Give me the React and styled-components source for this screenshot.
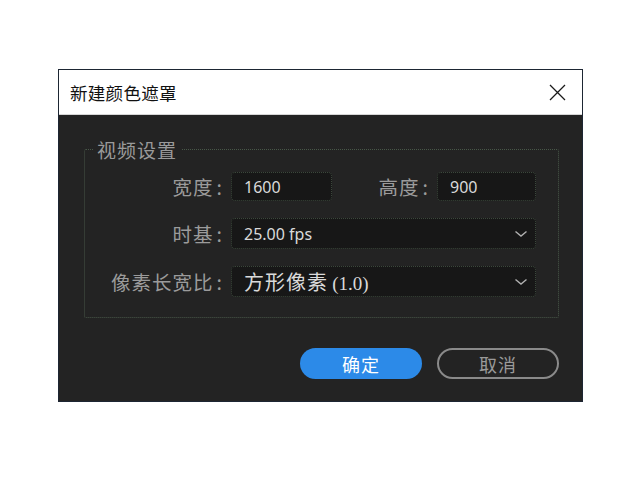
import React from "react";
import styled, { createGlobalStyle } from "styled-components";

const Global = createGlobalStyle`
  html, body { margin: 0; padding: 0; background: #ffffff; }
  body { width: 640px; height: 480px; overflow: hidden; }
  * { box-sizing: border-box; }
`;

const Page = styled.div`
  width: 640px;
  height: 480px;
  display: flex;
  justify-content: center;
  align-items: flex-start;
  padding-top: 69px;
  padding-left: 1px;
`;

const Dialog = styled.div`
  width: 525px;
  border: 1px solid #1d2633;
  background: #232323;
  display: flex;
  flex-direction: column;
  font-family: "Noto Sans CJK SC", "Noto Sans", sans-serif;
`;

const TitleBar = styled.div`
  height: 45px;
  background: #ffffff;
  border-bottom: 1px solid #d6d6d6;
  display: flex;
  align-items: center;
  justify-content: space-between;
  padding: 0 16px 0 11px;
`;

const Title = styled.div`
  font-size: 17.5px;
  color: #111111;
  letter-spacing: 0.3px;
`;

const CloseBtn = styled.button`
  border: 0;
  background: transparent;
  padding: 0;
  width: 18px;
  height: 18px;
  display: flex;
  align-items: center;
  justify-content: center;
  margin-top: 1px;
`;

const Body = styled.div`
  padding: 24px 23px 22px 25px;
  display: flex;
  flex-direction: column;
`;

const Group = styled.fieldset`
  margin: 0;
  padding: 12px 21px 20px 0;
  border: 1px dotted #485748;
  border-radius: 2px;
  min-width: 0;
`;

const Legend = styled.legend`
  margin-left: 8px;
  padding: 0 4px;
  font-size: 19px;
  line-height: 21px;
  color: #9a9a9a;
  letter-spacing: 1px;
`;

const Grid = styled.div`
  display: grid;
  grid-template-columns: 138px 101px 89px 99px;
  column-gap: 8px;
  row-gap: 17px;
  align-items: center;
`;

const Label = styled.div`
  text-align: right;
  font-size: 19.5px;
  line-height: 28px;
  color: #9b9b9b;
  white-space: nowrap;
  letter-spacing: 1px;
`;

const Colon = styled.span`
  margin-left: 3px;
  margin-right: 0;
`;

const Field = styled.div`
  height: ${(p) => (p.$tall ? 31 : 29)}px;
  grid-column: ${(p) => p.$span || "auto"};
  background: #171717;
  border: 1px dotted #3b473b;
  border-radius: 4px;
  display: flex;
  align-items: center;
  justify-content: space-between;
  padding: 0 7px 0 12px;
  color: #d6d6d6;
  font-family: "Noto Sans", "Noto Sans CJK SC", sans-serif;
  font-size: 16px;
`;

const FieldText = styled.span`
  font-family: "Noto Sans", "Noto Sans CJK SC", sans-serif;
  font-size: 16px;
  color: #dadada;
  white-space: nowrap;
`;

const CjkText = styled.span`
  font-family: "Noto Sans CJK SC", sans-serif;
  font-size: 20px;
  letter-spacing: 1px;
`;

const SerifText = styled.span`
  font-family: "Liberation Serif", serif;
  font-size: 19px;
`;

const Buttons = styled.div`
  display: flex;
  justify-content: flex-end;
  gap: 15px;
  margin-top: 30px;
`;

const Button = styled.button`
  width: 122px;
  height: 31px;
  border-radius: 16px;
  font-family: "Noto Sans CJK SC", sans-serif;
  font-size: 18px;
  display: flex;
  align-items: center;
  justify-content: center;
  padding: 0;
  letter-spacing: 1px;
  background: ${(p) => (p.$primary ? "#2c8ae8" : "transparent")};
  color: ${(p) => (p.$primary ? "#ffffff" : "#9a9a9a")};
  border: ${(p) => (p.$primary ? "0" : "2px solid #8a8a8a")};
`;

const Chevron = () => (
  <svg width="14" height="8" viewBox="0 0 14 8">
    <path d="M1.5 1.5 L7 6 L12.5 1.5" fill="none" stroke="#b0b0b0" strokeWidth="1.4" />
  </svg>
);

export default function App() {
  return (
    <>
      <Global />
      <Page>
        <Dialog>
          <TitleBar>
            <Title>新建颜色遮罩</Title>
            <CloseBtn aria-label="close">
              <svg width="17" height="17" viewBox="0 0 17 17">
                <path d="M1 1 L16 16 M16 1 L1 16" stroke="#1a1a1a" strokeWidth="1.3" />
              </svg>
            </CloseBtn>
          </TitleBar>
          <Body>
            <Group>
              <Legend>视频设置</Legend>
              <Grid>
                <Label>宽度<Colon>:</Colon></Label>
                <Field>
                  <FieldText>1600</FieldText>
                </Field>
                <Label>高度<Colon>:</Colon></Label>
                <Field>
                  <FieldText>900</FieldText>
                </Field>
                <Label>时基<Colon>:</Colon></Label>
                <Field $tall $span="2 / -1">
                  <FieldText>25.00 fps</FieldText>
                  <Chevron />
                </Field>
                <Label>像素长宽比<Colon>:</Colon></Label>
                <Field $tall $span="2 / -1">
                  <FieldText>
                    <CjkText>方形像素</CjkText> <SerifText>(1.0)</SerifText>
                  </FieldText>
                  <Chevron />
                </Field>
              </Grid>
            </Group>
            <Buttons>
              <Button $primary>确定</Button>
              <Button>取消</Button>
            </Buttons>
          </Body>
        </Dialog>
      </Page>
    </>
  );
}
